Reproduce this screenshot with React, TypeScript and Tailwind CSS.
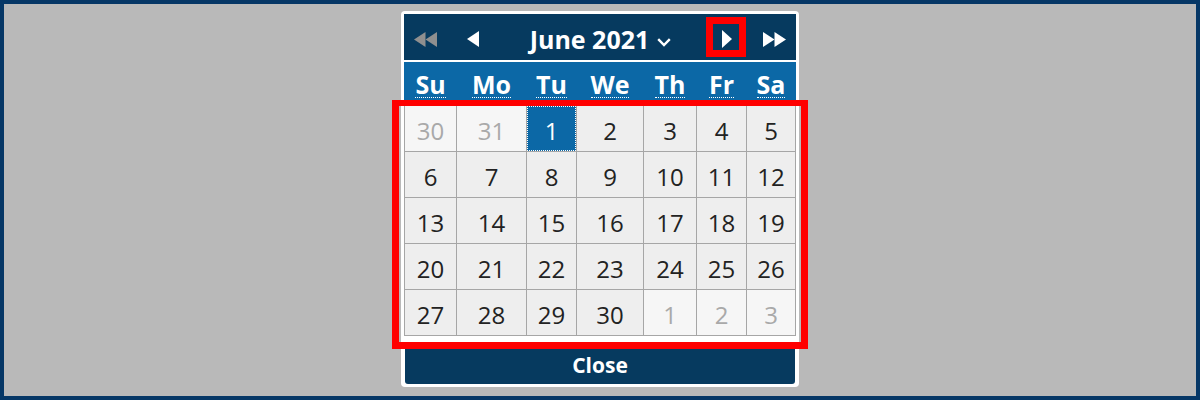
import React from "react";

const cols = "grid grid-cols-[51px_69px_49px_66px_52px_49px_48px]";

const dayNames = ["Su", "Mo", "Tu", "We", "Th", "Fr", "Sa"];

type Cell = { day: number; other?: boolean; selected?: boolean };

const weeks: Cell[][] = [
  [
    { day: 30, other: true },
    { day: 31, other: true },
    { day: 1, selected: true },
    { day: 2 },
    { day: 3 },
    { day: 4 },
    { day: 5 },
  ],
  [6, 7, 8, 9, 10, 11, 12].map((d) => ({ day: d })),
  [13, 14, 15, 16, 17, 18, 19].map((d) => ({ day: d })),
  [20, 21, 22, 23, 24, 25, 26].map((d) => ({ day: d })),
  [
    { day: 27 },
    { day: 28 },
    { day: 29 },
    { day: 30 },
    { day: 1, other: true },
    { day: 2, other: true },
    { day: 3, other: true },
  ],
];

function DoubleLeft({ className }: { className?: string }) {
  return (
    <svg viewBox="0 0 23 15" className={className} fill="currentColor">
      <path d="M11.5 0 L0 7.5 L11.5 15 Z" />
      <path d="M23 0 L11.5 7.5 L23 15 Z" />
    </svg>
  );
}

function DoubleRight({ className }: { className?: string }) {
  return (
    <svg viewBox="0 0 23 15" className={className} fill="currentColor">
      <path d="M0 0 L11.5 7.5 L0 15 Z" />
      <path d="M11.5 0 L23 7.5 L11.5 15 Z" />
    </svg>
  );
}

function Left({ className }: { className?: string }) {
  return (
    <svg viewBox="0 0 12 16" className={className} fill="currentColor">
      <path d="M12 0 L0 8 L12 16 Z" />
    </svg>
  );
}

function Right({ className }: { className?: string }) {
  return (
    <svg viewBox="0 0 10 18" className={className} fill="currentColor">
      <path d="M0 0 L10 9 L0 18 Z" />
    </svg>
  );
}

export default function App() {
  return (
    <div
      className="relative w-[1200px] h-[400px] bg-[#b9b9b9] border-4 border-[#063766] flex justify-center items-start pt-[7px]"
      style={{ fontFamily: '"Open Sans", "Noto Sans", sans-serif' }}
    >
      {/* Datepicker */}
      <div className="w-[398px] bg-white rounded-[4px] p-[3px]">
        {/* Title bar */}
        <div className="h-[46px] bg-[#063a5f] flex items-center pt-[4px] text-white">
          <DoubleLeft className="ml-[10px] w-[23px] h-[15px] text-[#8f8f8f]" />
          <Left className="ml-[30px] w-[12px] h-[16px]" />
          <div className="flex-1 flex items-center justify-center gap-[8px]">
            <span className="text-[25px] font-bold leading-none">June 2021</span>
            <svg
              viewBox="0 0 14 9"
              className="w-[14px] h-[9px] mt-[6px]"
              fill="none"
              stroke="currentColor"
              strokeWidth="2.4"
            >
              <path d="M1.2 1.2 L7 7 L12.8 1.2" />
            </svg>
          </div>
          <Right className="w-[10px] h-[18px]" />
          <DoubleRight className="ml-[31px] mr-[10px] w-[23px] h-[15px]" />
        </div>

        {/* Day names */}
        <div className={`${cols} gap-px px-px mt-[2px] h-[43px] bg-[#0c68a6] items-center pt-[4px]`}>
          {dayNames.map((n) => (
            <div key={n} className="text-center">
              <abbr className="text-white font-bold text-[25px] no-underline border-b border-dotted border-white leading-[26px] inline-block">
                {n}
              </abbr>
            </div>
          ))}
        </div>

        {/* Days grid */}
        <div className={`${cols} gap-px p-px bg-[#a6a6a6] auto-rows-[45px]`}>
          {weeks.flat().map((c, i) => (
            <div
              key={i}
              className={`flex items-center justify-center pt-[4px] text-[24px] ${
                c.selected
                  ? "bg-[#0c68a6] text-white outline-1 outline-dotted outline-white -outline-offset-1"
                  : c.other
                  ? "bg-[#f6f6f6] text-[#a9a9a9]"
                  : "bg-[#eeeeee] text-[#222222]"
              }`}
            >
              {c.day}
            </div>
          ))}
        </div>

        {/* Button pane */}
        <div className="pt-[11px] px-px">
          <button className="w-full h-[37px] bg-[#063a5f] text-white font-bold text-[21px] rounded-b-[3px] flex items-center justify-center">
            Close
          </button>
        </div>
      </div>

      {/* Annotations */}
      <div className="absolute left-[388px] top-[96px] w-[416px] h-[249px] border-[7px] border-t-[6px] border-[#ff0000] pointer-events-none" />
      <div className="absolute left-[702px] top-[13px] w-[40px] h-[40px] border-[7px] border-[#ff0000] pointer-events-none" />
    </div>
  );
}
